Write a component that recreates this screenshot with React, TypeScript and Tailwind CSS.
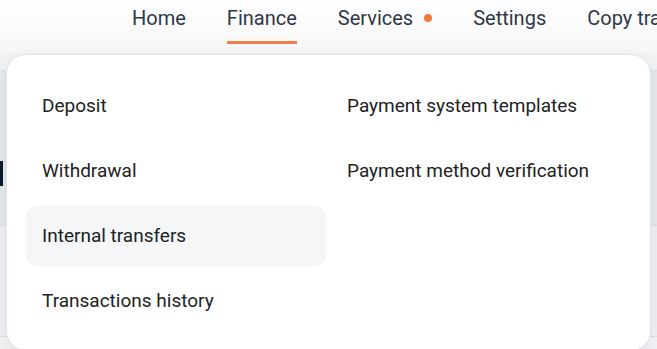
import React from "react";

const leftItems = ["Deposit", "Withdrawal", "Internal transfers", "Transactions history"];
const rightItems = ["Payment system templates", "Payment method verification"];

const navItems = [
  { label: "Home" },
  { label: "Finance", active: true },
  { label: "Services", dot: true },
  { label: "Settings" },
  { label: "Copy trading" },
];

const MenuItem: React.FC<{ label: string; active?: boolean }> = ({ label, active }) => (
  <a
    href="#"
    className={
      "flex h-[60px] items-center rounded-[10px] px-4 text-[19px] text-[#222] " +
      (active ? "bg-[#f5f6f8]" : "")
    }
  >
    {label}
  </a>
);

export default function App() {
  return (
    <div className="relative h-[349px] w-[657px] overflow-hidden bg-[#f1f2f4] font-['Roboto',sans-serif]">
      {/* top navigation */}
      <header className="h-[54px] bg-gradient-to-b from-white to-[#f6f6f7]">
        <nav className="flex h-full items-start gap-[41px] whitespace-nowrap pl-[132px] pt-[5px]">
          {navItems.map((n) => (
            <div key={n.label} className="flex h-[39px] flex-col justify-between">
              <div className="flex items-center text-[20px] leading-[26px] text-[#2f3747]">
                {n.label}
                {n.dot && <span className="ml-[11px] h-2 w-2 rounded-full bg-[#f07a3a]" />}
              </div>
              <div className={"h-[3px] " + (n.active ? "bg-[#ef7f47]" : "")} />
            </div>
          ))}
        </nav>
      </header>

      {/* page content behind the dropdown */}
      <div className="flex flex-col pt-[16px]">
        <div className="relative h-[156px] border-y border-[#dcdfe4] bg-[#e6e8eb]">
          <div className="absolute left-0 top-[90px] h-[25px] w-[3px] bg-[#0d1b2e]" />
        </div>
        <div className="h-[111px] border-b border-[#dcdfe4] bg-[#eeeff1]" />
      </div>

      {/* dropdown */}
      <div className="absolute left-[6px] top-[54px] w-[645px] rounded-[20px] border border-[#dfe2e7] bg-white px-[19px] pb-[19px] pt-[21px] shadow-[0_4px_14px_rgba(30,40,60,0.08)]">
        <div className="grid grid-cols-2 gap-[5px]">
          <div className="flex flex-col gap-[5px]">
            {leftItems.map((l) => (
              <MenuItem key={l} label={l} active={l === "Internal transfers"} />
            ))}
          </div>
          <div className="flex flex-col gap-[5px]">
            {rightItems.map((l) => (
              <MenuItem key={l} label={l} />
            ))}
          </div>
        </div>
      </div>
    </div>
  );
}
